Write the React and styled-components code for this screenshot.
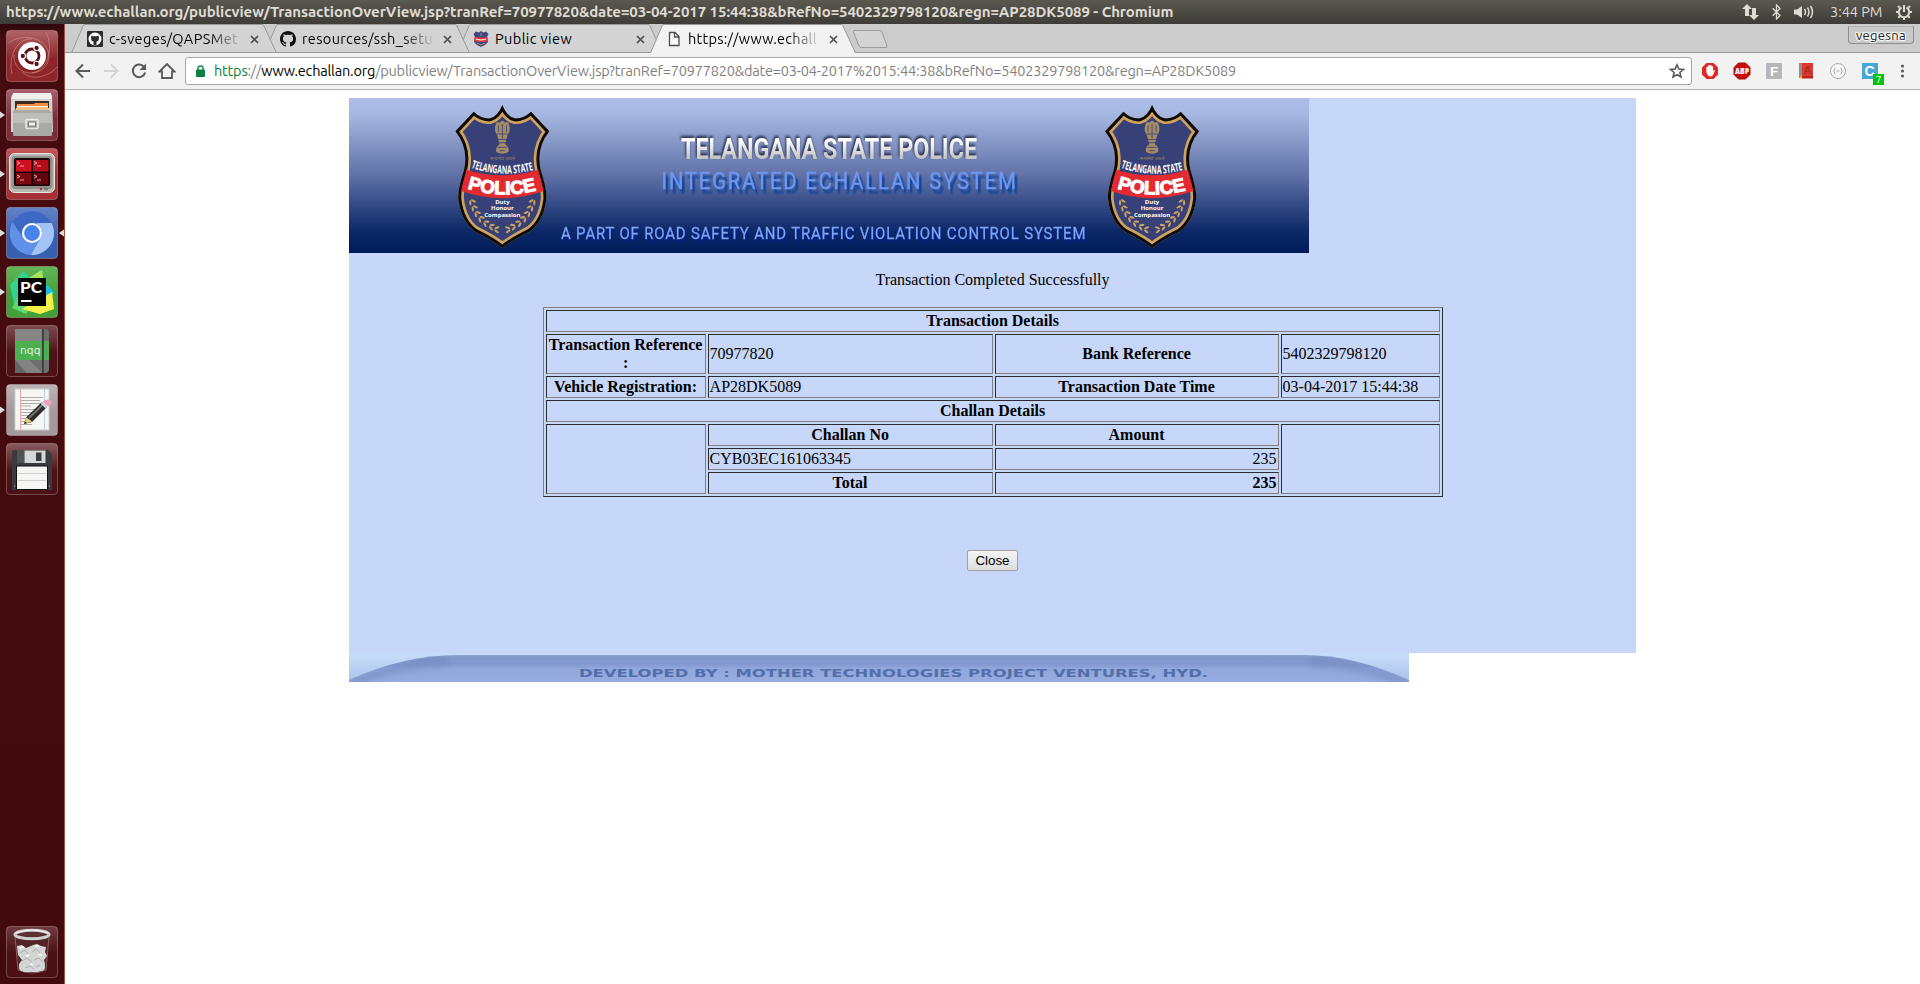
import React from "react";
import styled, { createGlobalStyle } from "styled-components";

const GlobalStyle = createGlobalStyle`
  html, body { margin: 0; padding: 0; background: #fff; }
  body { width: 1920px; height: 984px; overflow: hidden; }
  * { box-sizing: border-box; }
`;

const ui = `"Ubuntu", "Noto Sans", "Open Sans", sans-serif`;
const serif = `"Liberation Serif", "Times New Roman", serif`;

/* ---------- desktop frame ---------- */
const Desktop = styled.div`
  display: flex;
  flex-direction: column;
  width: 1920px;
  height: 984px;
  overflow: hidden;
`;
const TitleBar = styled.header`
  display: flex;
  align-items: center;
  height: 24px;
  flex: none;
  padding: 0 8px 0 6px;
  background: linear-gradient(#5b584f, #3d3c38);
  color: #dfdbd2;
  font-family: ${ui};
`;
const WindowTitle = styled.span`
  flex: 1;
  font-size: 15px;
  line-height: 24px;
  font-weight: 700;
  white-space: nowrap;
  letter-spacing: ${(p) => p.$track}px;
`;
const Indicators = styled.div`
  display: flex;
  align-items: center;
  height: 24px;
`;
const Indicator = styled.svg`
  display: block;
  margin-right: ${(p) => p.$gap}px;
`;
const Clock = styled.span`
  width: 53px;
  margin-right: 13px;
  font-size: 14.5px;
  line-height: 24px;
  letter-spacing: -0.05px;
  white-space: nowrap;
`;
const Body = styled.div`
  display: flex;
  flex: 1;
  min-height: 0;
`;

/* ---------- launcher ---------- */
const LauncherBar = styled.nav`
  display: flex;
  flex-direction: column;
  gap: 7px;
  width: 65px;
  flex: none;
  padding: 6px 0;
  background: linear-gradient(#2f070a, #450b0e 12px, #430a0d);
  border-right: 1px solid #9c4f4c;
`;
const LauncherIcon = styled.svg`
  display: block;
  width: 64px;
  height: 52px;
  flex: none;
  margin-top: ${(p) => (p.$last ? "auto" : 0)};
`;

/* ---------- browser ---------- */
const Browser = styled.main`
  display: flex;
  flex-direction: column;
  flex: 1;
  min-width: 0;
  background: #fff;
`;
const TabStrip = styled.div`
  display: flex;
  height: 29px;
  flex: none;
  padding-left: 6px;
  background: #ccc;
  box-shadow: inset 0 -1px #989898;
  font-family: ${ui};
`;
const TabBox = styled.div`
  position: relative;
  z-index: ${(p) => p.$z};
  display: flex;
  align-items: center;
  width: 206px;
  height: 29px;
  margin-right: -13px;
  padding: 0 18px 0 16px;
`;
const TabShape = styled.svg`
  position: absolute;
  inset: 0;
  z-index: -1;
`;
const Favicon = styled.svg`
  width: 16px;
  height: 16px;
  flex: none;
  margin-right: 6px;
`;
const TabLabel = styled.span`
  flex: 1;
  height: 26px;
  overflow: hidden;
  white-space: nowrap;
  color: #000;
  font-size: 14.5px;
  line-height: 26px;
  letter-spacing: ${(p) => p.$track}px;
  mask-image: ${(p) => (p.$fade ? "linear-gradient(90deg, #000 calc(100% - 32px), rgba(0,0,0,0.05))" : "none")};
`;
const TabClose = styled.svg`
  width: 9px;
  height: 9px;
  margin: 1px 0 0 9px;
  flex: none;
`;
const NewTab = styled.svg`
  margin: 6px 0 0 9px;
  position: relative;
`;
const ProfileButton = styled.div`
  width: 66px;
  height: 18px;
  margin: 2px 6px 0 auto;
  border: 1px solid #8f8f8f;
  border-top-color: #b5b5b5;
  border-radius: 0 0 4px 4px;
  background: #c9c9c9;
  color: #222;
  font: 13px/17px ${ui};
  letter-spacing: 0.3px;
  text-align: center;
  text-shadow: 0 0 1px #fff, 1px 1px 1px #fff, -1px -1px 1px #fff, 1px -1px 1px #fff, -1px 1px 1px #fff;
`;
const Toolbar = styled.div`
  display: flex;
  align-items: center;
  height: 37px;
  flex: none;
  padding: 0 8px 1px 9px;
  background: #f2f2f2;
  border-bottom: 1px solid #b4b4b4;
`;
const NavIcon = styled.svg`
  width: 18px;
  height: 18px;
  flex: none;
  margin-right: ${(p) => p.$gap ?? 10}px;
`;
const Omnibox = styled.div`
  display: flex;
  align-items: center;
  width: 1507px;
  height: 28px;
  flex: none;
  margin-right: 9px;
  padding: 0 6px 0 10px;
  background: #fff;
  border: 1px solid #a6a6a6;
  border-radius: 3px;
  font-family: ${ui};
`;
const Url = styled.span`
  flex: 1;
  margin-left: 9px;
  color: #7f7f7f;
  font-size: 14.5px;
  line-height: 26px;
  letter-spacing: ${(p) => p.$track}px;
  white-space: nowrap;
`;
const Scheme = styled.span`color: #0b8043;`;
const Host = styled.span`color: #000;`;
const Extension = styled.svg`
  width: 18px;
  height: 18px;
  flex: none;
  overflow: visible;
  margin-right: 14px;
`;

/* ---------- page ---------- */
const Page = styled.div`
  width: 1287px;
  margin: 8px 0 0 284px;
  font: 16px/18px ${serif};
  color: #000;
`;
const Content = styled.section`
  display: flex;
  flex-direction: column;
  align-items: center;
  height: 555px;
  background: repeating-linear-gradient(#c7d7f9 0 3px, #c6d6f8 3px 4px);
`;
const Banner = styled.svg`
  display: block;
  align-self: flex-start;
  flex: none;
`;
const BannerText = styled.text`
  font-family: Roboto, sans-serif;
  font-size: ${(p) => p.$size}px;
  font-weight: ${(p) => p.$weight};
  filter: drop-shadow(${(p) => p.$shadow});
`;
const Message = styled.p`
  margin: 18px 0;
`;
const Details = styled.table`
  width: 900px;
  margin-left: 0.2px;
  flex: none;
  table-layout: fixed;
  border: 1px solid;
  border-color: #808080 #2c2c2c #2c2c2c #808080;
  border-collapse: separate;
  border-spacing: 2px;
`;
const Cell = styled.td`
  padding: 1px;
  border: 1px solid;
  border-color: #2c2c2c #808080 #808080 #2c2c2c;
  text-align: ${(p) => p.$align || "left"};
  vertical-align: middle;
`;
const Head = styled(Cell).attrs({ as: "th" })`
  font-weight: 700;
  text-align: ${(p) => p.$align || "center"};
`;
const Column = styled.col`
  width: ${(p) => p.$width}px;
`;
const CloseButton = styled.button`
  width: 51px;
  height: 21px;
  margin: 53px 0 0;
  padding: 0;
  border: 1px solid #a0a0a0;
  border-radius: 2px;
  background: linear-gradient(#f4f4f4, #dedede);
  color: #000;
  font: 13.333px/17px "Liberation Sans", Arial, sans-serif;
`;
const FooterArt = styled.svg`
  display: block;
`;

/* ---------- launcher drawings ---------- */
function Launcher({ id, base, top, mark, active, last, children }) {
  return (
    <LauncherIcon viewBox="0 0 64 52" $last={last}>
      <defs>
        <linearGradient id={id} x1="0" y1="0" x2="0" y2="1">
          <stop offset="0" stopColor={top} />
          <stop offset="0.55" stopColor={base} />
          <stop offset="1" stopColor={base} />
        </linearGradient>
      </defs>
      <rect x="6.5" y="0.5" width="51" height="51" rx="3.5" fill={`url(#${id})`} stroke="#fff" strokeOpacity="0.25" />
      {children}
      {mark && <path d="M0 22.5L5 26L0 29.5Z" fill="#dcdcdc" />}
      {active && <path d="M64 22.5L59 26L64 29.5Z" fill="#dcdcdc" />}
    </LauncherIcon>
  );
}

function LauncherItems() {
  return (
    <LauncherBar>
      <Launcher id="l1" base="#8d2529" top="#b06468">
        <g fill="none" stroke="#e2a9a4" strokeOpacity="0.45">
          <path d="M8 13C24 2 48 8 49 26C49 36 40 43 32 43" />
          <path d="M46 2C54 18 48 42 30 43C20 43 13 34 14 25" />
          <path d="M12 44C8 28 16 8 32 9" />
          <path d="M22 42C32 52 50 46 57 37" />
        </g>
        <circle cx="32" cy="26.5" r="14.5" fill="#5c1013" fillOpacity="0.5" />
        <circle cx="32" cy="26" r="14" fill="#fff" />
        <circle cx="32" cy="26" r="7" fill="none" stroke="#5a1215" strokeWidth="2.8" />
        <g fill="#5a1215" stroke="#fff" strokeWidth="1.1">
          <circle cx="22.8" cy="26" r="2.7" />
          <circle cx="36.6" cy="18" r="2.7" />
          <circle cx="36.6" cy="34" r="2.7" />
        </g>
      </Launcher>

      <Launcher id="l2" base="#7b2d38" top="#a8626f" mark>
        <path d="M13 5L14 4H50L52 7L53 43H11V8Z" fill="#d3d3d0" />
        <path d="M13 4H51L52 10H12Z" fill="#efefec" />
        <rect x="15" y="12" width="34" height="10" fill="#3b2a20" />
        <path d="M17 15H34L35 14H48V22H16Z" fill="#ef9146" />
        <rect x="17" y="17" width="31" height="1.4" fill="#fff" />
        <path d="M16 19H49V22H15Z" fill="#f4c385" />
        <path d="M15 21H49L52 24V46Q52 47 51 47H14Q13 47 13 46V22Z" fill="#a9a9a7" />
        <path d="M13 24H52V34H13Z" fill="#bdbdbb" />
        <rect x="26" y="30.500" width="12" height="9" rx="1.500" fill="none" stroke="#e8e8e8" strokeWidth="1.6" />
        <rect x="28.500" y="33" width="7" height="4" fill="#f4f4f4" stroke="#777" />
      </Launcher>

      <Launcher id="l3" base="#a53136" top="#c3565b" mark>
        <rect x="9.500" y="5.500" width="45" height="39" rx="5" fill="#b7b8b0" stroke="#e9e9e4" />
        <rect x="11.500" y="8" width="41" height="33" rx="4" fill="#8f918a" />
        <rect x="14" y="10" width="36" height="28" rx="1.500" fill="#190507" />
        <rect x="16" y="12" width="15.500" height="11.500" fill="#cf1020" />
        <rect x="33" y="12" width="15.500" height="11.500" fill="#b50e1a" />
        <rect x="16" y="25" width="15.500" height="11.500" fill="#7c0810" />
        <rect x="33" y="25" width="15.500" height="11.500" fill="#5e060b" />
        <path
          d="M17 13.500L20 15L17 16.500M20 18H24M34 13.500L37 15L34 16.500M37 18H41M17 27L20 28.500L17 30M20 32H24M34 27L37 28.500L34 30M37 32H41"
          fill="none"
          stroke="#f5b8b8"
          strokeWidth="0.9"
        />
        <circle cx="41" cy="41" r="1.200" fill="#e01b1b" />
        <rect x="44" y="39.800" width="4" height="2.400" rx="1" fill="#777" />
      </Launcher>

      <Launcher id="l4" base="#3960b0" top="#6384c8" mark active>
        <circle cx="32" cy="26" r="22" fill="#5e8ee6" />
        <path d="M12.500 15.500A22 22 0 0 1 51.500 16H32A10 10 0 0 0 22.500 30Z" fill="#3d69c4" />
        <path d="M51.500 16A22 22 0 0 1 31 48L40.700 31A10 10 0 0 0 37 17.500V16Z" fill="#a3c3f7" />
        <path d="M12.500 15.500L23.300 31A10 10 0 0 0 34 36L31 48A22 22 0 0 1 12.500 15.500Z" fill="#6091e8" />
        <circle cx="32" cy="26" r="10" fill="#fff" />
        <circle cx="32" cy="26" r="7.900" fill="#4783ea" />
      </Launcher>

      <Launcher id="l5" base="#43a139" top="#62b658" mark>
        <path d="M10 19L23 5L30 11L26 40L15 43Z" fill="#35d18f" />
        <path d="M29 12L42 4L44 20L26 48L12 42Z" fill="#5fd873" />
        <path d="M43 15L54 26L49 38L40 30Z" fill="#19c1e0" />
        <path d="M45 30L52 26L54 43L40 48L22 43Z" fill="#f6f04a" />
        <path d="M29 12L42 4L43 13Z" fill="#a6e35a" />
        <rect x="18" y="12" width="28" height="28" fill="#050505" />
        <text x="20" y="27" fill="#fff" fontFamily="Lato, sans-serif" fontWeight="900" fontSize="15" textLength="22" lengthAdjust="spacingAndGlyphs">PC</text>
        <rect x="21" y="34" width="10.500" height="2" fill="#fff" />
      </Launcher>

      <Launcher id="l6" base="#4c1216" top="#7e4a4e">
        <path d="M15 4H45Q49 4 49 8V44Q49 48 45 48H15Z" fill="#6f6f6f" />
        <path d="M15 4H42V17H15Z" fill="#868686" />
        <rect x="15" y="16" width="34" height="19" fill="#4caf50" />
        <path d="M15 35H29L42 48H15Z" fill="#838383" />
        <path d="M15 35L27 48H15Z" fill="#666" />
        <rect x="42" y="4" width="1.800" height="44" fill="#3c3c3c" />
        <text x="20" y="28.500" fill="#dff3df" fontFamily="DejaVu Sans, sans-serif" fontSize="10" textLength="20.500" lengthAdjust="spacingAndGlyphs">nqq</text>
      </Launcher>

      <Launcher id="l7" base="#a59a9b" top="#bdb4b5" mark>
        <rect x="15" y="5" width="34" height="41" fill="#f6f6f4" stroke="#cfcfcf" />
        <path d="M20.500 5V46" stroke="#f2a7a7" />
        <path d="M44.500 5V46" stroke="#bcd3f2" />
        <path
          d="M21 13.500H43M21 16.500H40M21 19.500H42M21 22H31M21 25.500H41M21 28.500H38M21 31.500H36M21 34.500H33M21 37.500H29M21 40.500H32"
          stroke="#9c9c9c"
          strokeWidth="0.800"
        />
        <path d="M24 40L26.500 33L42 18L47 23L32 38Z" fill="#2c2c2c" />
        <path d="M29 34L43 20.500" stroke="#747474" strokeWidth="1.800" />
        <path d="M24 40L26.500 33.500L32 37.500Z" fill="#e9d27d" />
        <path d="M24 40L25 37.500L27 39Z" fill="#222" />
        <path d="M40.500 19.500L43 17.500L48 22L45.500 24.500Z" fill="#cfcfcf" />
        <path d="M43 17.500Q48 14 51 17Q54 20 48 22.500Z" fill="#efa0bd" />
      </Launcher>

      <Launcher id="l8" base="#4c1216" top="#8a5a5e">
        <path d="M14 7H48L52 11V47H12V9Q12 7 14 7Z" fill="#393b3c" />
        <path d="M17 7H24V20H17Z" fill="#505254" />
        <rect x="24.500" y="7.500" width="21" height="12.500" fill="#d5d6d7" />
        <rect x="36" y="9.500" width="5.500" height="8.500" fill="#3a3c3e" />
        <rect x="16.500" y="23" width="31" height="23.500" fill="#f5f5f3" stroke="#111" />
        <path d="M18 30.500H46M18 37.500H46" stroke="#cfcfcf" />
        <path d="M14 43H15M49 43H50" stroke="#aaa" />
      </Launcher>

      <Launcher id="l9" base="#4a1014" top="#6f3a3d" last>
        <path d="M15 10L18 44Q32 50 46 44L49 10Z" fill="#522427" stroke="#8f7476" strokeWidth="0.800" />
        <g fill="#d3d6d5">
          <path d="M17 20L22 19L26 22L31 20L33 19L37 18L41 20L46 21L45 26L47 30L44 34L45 38L43 44L38 46H24L20 44L19 38L22 34L18 29Z" />
          <circle cx="23" cy="41" r="4" /><circle cx="41" cy="41" r="4" />
        </g>
        <path d="M20 27L25 24L28 28M32 26L36 23L40 27M22 35L27 32L32 36M34 34L39 32L43 36M25 42L30 40L34 43M36 41L40 39" fill="none" stroke="#aaadac" />
        <path d="M20 22L24 21M35 20L39 20M26 30L29 29M38 29L42 29M30 38L33 39" stroke="#fafafa" strokeWidth="1.400" />
        <ellipse cx="32" cy="8.500" rx="17" ry="4.300" fill="#5a3032" stroke="#cfcfcf" strokeWidth="3" />
        <path d="M16 7Q32 1 48 7" fill="none" stroke="#f4f4f4" />
      </Launcher>
    </LauncherBar>
  );
}

/* ---------- browser drawings ---------- */
const OCTOCAT =
  "M8 0C3.580 0 0 3.580 0 8c0 3.540 2.290 6.530 5.470 7.590.4.070.55-.17.55-.38 0-.19-.01-.82-.01-1.490-2.010.37-2.530-.49-2.690-.94-.09-.23-.48-.94-.82-1.130-.28-.15-.68-.52-.01-.53.63-.01 1.080.58 1.230.82.72 1.210 1.870.87 2.330.66.07-.52.28-.87.51-1.070-1.780-.2-3.640-.89-3.640-3.950 0-.87.31-1.590.82-2.150-.08-.2-.36-1.020.08-2.120 0 0 .67-.21 2.200.82.64-.18 1.320-.27 2-.27s1.360.09 2 .27c1.530-1.040 2.200-.82 2.200-.82.44 1.100.16 1.920.08 2.120.51.56.82 1.270.82 2.150 0 3.070-1.870 3.750-3.650 3.950.29.25.54.73.54 1.480 0 1.070-.01 1.930-.01 2.200 0 .21.15.46.55.38A8.010 8.010 0 0 0 16 8c0-4.420-3.580-8-8-8z";

function Tab({ icon, label, active, z, fade = true, track = 0 }) {
  return (
    <TabBox $z={z}>
      <TabShape width="206" height="29" viewBox="0 0 206 29">
        <path
          d="M0.500 29L12 2Q12.500 0.500 14 0.500H191Q192.500 0.500 193 2L205.500 29"
          fill={active ? "#f2f2f2" : "#d3d3d3"}
          stroke="#999"
        />
        {!active && <path d="M0 28.500H206" stroke="#989898" />}
      </TabShape>
      {icon}
      <TabLabel $fade={fade} $track={track}>{label}</TabLabel>
      <TabClose viewBox="0 0 9 9">
        <path d="M1 1L8 8M8 1L1 8" stroke="#4f4f4f" strokeWidth="1.700" />
      </TabClose>
    </TabBox>
  );
}

const BoxedCatIcon = () => (
  <Favicon viewBox="0 0 16 16">
    <rect width="16" height="16" rx="1" fill="#2b2b2b" />
    <circle cx="8" cy="8" r="6.500" fill="#fff" />
    <path d="M4.500 4.500L6.500 5.200H9.500L11.500 4.500L12 7.500Q12 10 9.500 10.500V14H6.500V10.500Q4 10 4 7.500Z" fill="#2b2b2b" />
  </Favicon>
);
const CatIcon = () => (
  <Favicon viewBox="0 0 16 16"><path d={OCTOCAT} fill="#111" /></Favicon>
);
const CrestIcon = () => (
  <Favicon viewBox="0 0 16 16">
    <path d="M8 0L10 1.500L13 0.500L15.500 3L14 6L15 11L12 14L8 16L4 14L1 11L2 6L0.500 3L3 0.500L6 1.500Z" fill="#414a80" />
    <path d="M1.500 6Q8 7.500 14.500 6L15 10Q8 12 1 10Z" fill="#e23b3b" />
    <path d="M3 8.200Q8 9.500 13 8.200" stroke="#fbd5d5" strokeWidth="1.300" fill="none" />
    <path d="M8 2V5M4 12L8 14L12 12" stroke="#a99365" fill="none" />
  </Favicon>
);
const PageIcon = () => (
  <Favicon viewBox="0 0 16 16">
    <path d="M3.500 1.500H9L13 5.500V14.500H3.500ZM8.500 1.500V6H13" fill="#fafafa" stroke="#4d4d4d" strokeWidth="1.300" />
  </Favicon>
);

function StatusArea() {
  return (
    <Indicators>
      <Indicator width="17" height="16" viewBox="0 0 17 16" $gap={13}>
        <path d="M5 0L10 5H7V12H3V5H0ZM12 16L7 11H10V4H14V11H17Z" fill="#dfdbd2" />
      </Indicator>
      <Indicator width="9" height="16" viewBox="0 0 9 16" $gap={13}>
        <path d="M0.700 4.300L8 11.500L4.500 15V1L8 4.500L0.700 11.700" fill="none" stroke="#dfdbd2" strokeWidth="1.300" />
      </Indicator>
      <Indicator width="20" height="16" viewBox="0 0 20 16" $gap={16}>
        <path d="M0 5.500H3L8 2V14L3 10.500H0Z" fill="#dfdbd2" />
        <path d="M10.500 5Q12.500 8 10.500 11M13.500 3.500Q16.500 8 13.500 12.500M16.500 2Q20.500 8 16.500 14" fill="none" stroke="#dfdbd2" strokeWidth="1.500" />
      </Indicator>
      <Clock>3:44 PM</Clock>
      <Indicator width="16" height="16" viewBox="0 0 16 16" $gap={0}>
        <path d="M5.500 3.500A5.200 5.200 0 1 0 10.500 3.500" fill="none" stroke="#dfdbd2" strokeWidth="2" />
        <path d="M8 1V8" stroke="#dfdbd2" strokeWidth="2" />
        <path d="M3.500 3.500L2 2M12.500 3.500L14 2M2.500 8H0M13.500 8H16M4 12L2.300 13.700M12 12L13.700 13.700M8 13.500V16" stroke="#dfdbd2" strokeWidth="2" />
      </Indicator>
    </Indicators>
  );
}

function BrowserToolbar() {
  return (
    <Toolbar>
      <NavIcon viewBox="0 0 18 18"><path d="M16 9H3M9 2.500L2.500 9L9 15.500" fill="none" stroke="#5a5a5a" strokeWidth="2" /></NavIcon>
      <NavIcon viewBox="0 0 18 18"><path d="M2 9H15M9 2.500L15.500 9L9 15.500" fill="none" stroke="#d3d3d3" strokeWidth="2" /></NavIcon>
      <NavIcon viewBox="0 0 18 18">
        <path d="M14.300 5.200A6.300 6.300 0 1 0 15.200 10.500" fill="none" stroke="#5a5a5a" strokeWidth="2" />
        <path d="M16 1.500V8H9.500Z" fill="#5a5a5a" />
      </NavIcon>
      <NavIcon viewBox="0 0 18 18" $gap={9}>
        <path d="M1.500 9.500L9 2L16.500 9.500H14V16H4V9.500Z" fill="none" stroke="#5a5a5a" strokeWidth="1.800" />
      </NavIcon>
      <Omnibox>
        <svg width="9" height="12" viewBox="0 0 9 12">
          <rect x="0" y="4.500" width="9" height="7.500" rx="1" fill="#0b8043" />
          <path d="M2 5V3Q2 1 4.500 1T7 3V5" fill="none" stroke="#0b8043" strokeWidth="1.400" />
        </svg>
        <Url $track={-0.193}><Scheme>https</Scheme>://<Host>www.echallan.org</Host>/publicview/TransactionOverView.jsp?tranRef=70977820&amp;date=03-04-2017%2015:44:38&amp;bRefNo=5402329798120&amp;regn=AP28DK5089</Url>
        <svg width="16" height="16" viewBox="0 0 16 16">
          <path d="M8 1.800L9.800 6.100L14.400 6.500L10.900 9.500L12 14L8 11.600L4 14L5.100 9.500L1.600 6.500L6.200 6.100Z" fill="none" stroke="#5a5a5a" strokeWidth="1.600" />
        </svg>
      </Omnibox>
      <Extension viewBox="0 0 18 18">
        <path d="M5.500 1H12.500L17 5.500V12.500L12.500 17H5.500L1 12.500V5.500Z" fill="#e52424" />
        <path d="M5.300 10V5.200Q6 4.200 6.800 5.200V3.700Q7.700 2.700 8.600 3.700V3.200Q9.500 2.300 10.400 3.200V4.500Q11.500 3.500 12.100 5V9L13.200 8Q14.200 8 13.700 9L11.800 13.500Q9 15.500 6.500 13Z" fill="#fff" />
      </Extension>
      <Extension viewBox="0 0 18 18">
        <path d="M5.500 1H12.500L17 5.500V12.500L12.500 17H5.500L1 12.500V5.500Z" fill="#c70d0d" stroke="#a80b0b" />
        <text x="2" y="12" fill="#fff" fontFamily="Open Sans, sans-serif" fontWeight="800" fontSize="8" textLength="14" lengthAdjust="spacingAndGlyphs">ABP</text>
      </Extension>
      <Extension viewBox="0 0 18 18">
        <rect x="1" y="1" width="16" height="16" rx="1" fill="#b7b7b7" />
        <text x="5" y="14" fill="#fff" fontFamily="Liberation Sans, sans-serif" fontWeight="700" fontSize="13.500">F</text>
      </Extension>
      <Extension viewBox="0 0 18 18">
        <path d="M2 2Q2 1 3 1H16V14H5L2 16Z" fill="#dc3a31" />
        <path d="M2 2V15L5 14V1Z" fill="#8f8f94" />
        <path d="M4 14H16V16.500H5Z" fill="#b52520" />
        <path d="M4 13L6 17L2.500 16Z" fill="#f1b82d" />
        <text x="6.500" y="12" fill="#b02a25" fontFamily="Liberation Sans, sans-serif" fontWeight="700" fontSize="11.500">A</text>
      </Extension>
      <Extension viewBox="0 0 18 18">
        <circle cx="9" cy="9" r="7.500" fill="#f7f7f7" stroke="#a9a9a9" />
        <path d="M6.500 6Q5 6 5.500 8L4.500 9L5.500 10Q5 12 6.500 12M11.500 6Q13 6 12.500 8L13.500 9L12.500 10Q13 12 11.500 12M7.500 9H10.500" fill="none" stroke="#aaa" />
      </Extension>
      <Extension viewBox="0 0 18 18">
        <rect x="1" y="1" width="16" height="16" fill="#49a7d3" />
        <text x="3.500" y="14" fill="#fff" fontFamily="Liberation Sans, sans-serif" fontWeight="700" fontSize="14">C</text>
        <rect x="12" y="12" width="11" height="11" fill="#00c410" />
        <text x="15" y="21" fill="#fff" fontFamily="Noto Sans, sans-serif" fontSize="9">7</text>
      </Extension>
      <svg width="18" height="18" viewBox="0 0 18 18">
        <g fill="#5a5a5a"><circle cx="9.500" cy="4" r="1.600" /><circle cx="9.500" cy="9" r="1.600" /><circle cx="9.500" cy="14" r="1.600" /></g>
      </svg>
    </Toolbar>
  );
}

/* ---------- banner ---------- */
const SHIELD =
  "M488 45Q502 80 525 85Q551 87 574 65L629 124Q588 175 603 240Q623 300 620 328Q612 395 570 425Q515 452 488 475Q461 452 406 425Q364 395 356 328Q353 300 373 240Q388 175 347 124L402 65Q425 87 451 85Q474 80 488 45Z";
const LEAVES = [
  [398, 338, 60], [405, 356, 55], [414, 373, 50], [426, 388, 42], [441, 401, 32], [458, 411, 20], [474, 419, 8],
];

function Shield({ x, name }) {
  const side = LEAVES.map(([cx, cy, r], i) => (
    <g key={i} transform={`translate(${cx} ${cy}) rotate(${r})`}>
      <ellipse cx="0" cy="-6" rx="8" ry="3.200" transform="rotate(-28)" />
      <ellipse cx="0" cy="6" rx="8" ry="3.200" transform="rotate(28)" />
    </g>
  ));
  return (
    <g transform={`translate(${x} -8) scale(0.33333)`}>
      <clipPath id={`${name}c`}><path d={SHIELD} /></clipPath>
      <path id={`${name}a`} d="M394 233Q488 266 586 239" fill="none" />
      <path id={`${name}b`} d="M383 296Q488 329 597 299" fill="none" />
      <g clipPath={`url(#${name}c)`}>
        <path d={SHIELD} fill="#374178" stroke="#cfa35e" strokeWidth="34" />
        <path d={SHIELD} fill="none" stroke="#0b0b0d" strokeWidth="18" />
      </g>
      <path d="M380 239Q488 272 596 239L612 303Q488 346 364 303Z" fill="#e42a31" />
      <g fill="#a58c66">
        <path d="M468 104Q470 92 480 98Q488 86 496 98Q506 92 508 104Q514 122 504 134L500 148H476L472 134Q462 122 468 104Z" />
        <path d="M476 150H500L496 162Q510 172 506 186Q488 196 470 186Q466 172 480 162Z" />
      </g>
      <path
        d="M476 106V126M488 102V146M500 106V126M471 132H505M478 158H498M474 172H502M480 182H496"
        fill="none"
        stroke="#374178"
        strokeWidth="2.500"
      />
      <text x="451" y="209" fill="#94805f" fontFamily="Noto Sans, sans-serif" fontSize="16" textLength="74" lengthAdjust="spacingAndGlyphs">सत्यमेव जयते</text>
      <g fill="#fff">
        <text fontFamily="Open Sans, sans-serif" fontWeight="700" fontSize="34" textLength="190" lengthAdjust="spacingAndGlyphs">
          <textPath href={`#${name}a`} textLength="190" lengthAdjust="spacingAndGlyphs">TELANGANA STATE</textPath>
        </text>
        <text fontFamily="Liberation Sans, sans-serif" fontWeight="700" fontSize="56" stroke="#fff" strokeWidth="3" textLength="210" lengthAdjust="spacingAndGlyphs">
          <textPath href={`#${name}b`} textLength="210" lengthAdjust="spacingAndGlyphs">POLICE</textPath>
        </text>
        <g fontFamily="Open Sans, sans-serif" fontSize="18" fontWeight="700" textAnchor="middle">
          <text x="488" y="343">Duty</text>
          <text x="488" y="361">Honour</text>
          <text x="488" y="380">Compassion</text>
        </g>
      </g>
      <g fill="#cfa35e">
        {side}
        <g transform="translate(976 0) scale(-1 1)">{side}</g>
      </g>
    </g>
  );
}

function PageBanner() {
  return (
    <Banner width="960" height="155" viewBox="0 0 960 155">
      <defs>
        <linearGradient id="sky" x1="0" y1="0" x2="0" y2="1">
          <stop offset="0" stopColor="#adbee8" />
          <stop offset="0.100" stopColor="#a7b8e2" />
          <stop offset="0.500" stopColor="#6071a7" />
          <stop offset="0.850" stopColor="#0f2a69" />
          <stop offset="1" stopColor="#001b58" />
        </linearGradient>
        <linearGradient id="chrome" x1="0" y1="0" x2="0" y2="1">
          <stop offset="0.250" stopColor="#fff" />
          <stop offset="0.850" stopColor="#b9b9b9" />
        </linearGradient>
      </defs>
      <rect width="960" height="155" fill="url(#sky)" />
      <Shield x={-9.3} name="left" />
      <Shield x={640.4} name="right" />
      <BannerText
        x="0" y="0" transform="translate(332 61) scale(0.800 1)"
        $size={30} $weight={700} $shadow="-1px -2px 1.500px #1d2542"
        fill="url(#chrome)" textLength="370" lengthAdjust="spacingAndGlyphs"
      >
        TELANGANA STATE POLICE
      </BannerText>
      <BannerText
        x="0" y="0" transform="translate(312.500 90.500) scale(0.860 1)"
        $size={23.5} $weight={400} $shadow="3px 4px 0.800px #0f459f"
        fill="#6d97f2" stroke="#6d97f2" strokeWidth="0.400" textLength="412"
      >
        INTEGRATED ECHALLAN SYSTEM
      </BannerText>
      <BannerText
        x="0" y="0" transform="translate(212 141) scale(0.880 1)"
        $size={17} $weight={400} $shadow="2px 3px 0.800px #022085"
        fill="#7fa3f5" stroke="#7fa3f5" strokeWidth="0.300" textLength="596"
      >
        A PART OF ROAD SAFETY AND TRAFFIC VIOLATION CONTROL SYSTEM
      </BannerText>
    </Banner>
  );
}

function PageFooter() {
  return (
    <FooterArt width="1060" height="29" viewBox="0 0 1060 29">
      <defs>
        <linearGradient id="under" x1="0" y1="0" x2="0" y2="1">
          <stop offset="0" stopColor="#c9ddfa" />
          <stop offset="1" stopColor="#a9c2ea" />
        </linearGradient>
        <linearGradient id="bar" x1="0" y1="0" x2="0" y2="1">
          <stop offset="0" stopColor="#8aa3cf" />
          <stop offset="0.120" stopColor="#8198cc" />
          <stop offset="0.380" stopColor="#859bd1" />
          <stop offset="0.500" stopColor="#92a7dc" />
          <stop offset="1" stopColor="#96abe0" />
        </linearGradient>
        <filter id="edge" x="-5%" y="-40%" width="110%" height="180%"><feGaussianBlur stdDeviation="3" /></filter>
        <clipPath id="barClip"><path d="M0 27Q55 2 110 2H954Q1005 2 1060 27V29H0Z" /></clipPath>
      </defs>
      <rect width="1060" height="29" fill="url(#under)" />
      <path d="M0 27Q55 2 110 2H954Q1005 2 1060 27V29H0Z" fill="url(#bar)" />
      <g clipPath="url(#barClip)">
        <path d="M0 31Q50 10 100 8M1060 31Q1008 10 960 8" fill="none" stroke="#7289bd" strokeWidth="10" strokeOpacity="0.550" filter="url(#edge)" />
      </g>
      <text x="230" y="23.700" fill="#516ea8" fontFamily="DejaVu Sans, sans-serif" fontWeight="700" fontSize="9.600" textLength="629" lengthAdjust="spacingAndGlyphs">DEVELOPED BY : MOTHER TECHNOLOGIES PROJECT VENTURES, HYD.</text>
    </FooterArt>
  );
}

function TransactionTable() {
  return (
    <Details>
      <colgroup>
        <Column $width={160} /><Column $width={285} /><Column $width={284} /><Column $width={159} />
      </colgroup>
      <tbody>
        <tr><Head colSpan={4}>Transaction Details</Head></tr>
        <tr>
          <Head>Transaction Reference :</Head><Cell>70977820</Cell>
          <Head>Bank Reference</Head><Cell>5402329798120</Cell>
        </tr>
        <tr>
          <Head>Vehicle Registration:</Head><Cell>AP28DK5089</Cell>
          <Head>Transaction Date Time</Head><Cell>03-04-2017 15:44:38</Cell>
        </tr>
        <tr><Head colSpan={4}>Challan Details</Head></tr>
        <tr>
          <Cell rowSpan={3} /><Head>Challan No</Head><Head>Amount</Head><Cell rowSpan={3} />
        </tr>
        <tr><Cell>CYB03EC161063345</Cell><Cell $align="right">235</Cell></tr>
        <tr><Head>Total</Head><Head $align="right">235</Head></tr>
      </tbody>
    </Details>
  );
}

export default function App() {
  return (
    <Desktop>
      <GlobalStyle />
      <TitleBar>
        <WindowTitle $track={-0.07}>
          https://www.echallan.org/publicview/TransactionOverView.jsp?tranRef=70977820&amp;date=03-04-2017 15:44:38&amp;bRefNo=5402329798120&amp;regn=AP28DK5089 - Chromium
        </WindowTitle>
        <StatusArea />
      </TitleBar>
      <Body>
        <LauncherItems />
        <Browser>
          <TabStrip>
            <Tab z={3} icon={<BoxedCatIcon />} label="c-sveges/QAPSMet" track={0.4} />
            <Tab z={2} icon={<CatIcon />} label="resources/ssh_setu" track={0.35} />
            <Tab z={1} icon={<CrestIcon />} label="Public view" fade={false} track={0.4} />
            <Tab z={4} icon={<PageIcon />} label="https://www.echall" active track={0.25} />
            <NewTab width="36" height="19" viewBox="0 0 36 19">
              <path d="M3 0.500H28Q29 0.500 30 2L35 16Q35 17.500 34 17.500H9Q8 17.500 7 16L1.500 2Q1.500 0.500 3 0.500Z" fill="#d3d3d3" stroke="#9b9b9b" />
            </NewTab>
            <ProfileButton>vegesna</ProfileButton>
          </TabStrip>
          <BrowserToolbar />
          <Page>
            <Content>
              <PageBanner />
              <Message>Transaction Completed Successfully</Message>
              <TransactionTable />
              <CloseButton>Close</CloseButton>
            </Content>
            <PageFooter />
          </Page>
        </Browser>
      </Body>
    </Desktop>
  );
}
